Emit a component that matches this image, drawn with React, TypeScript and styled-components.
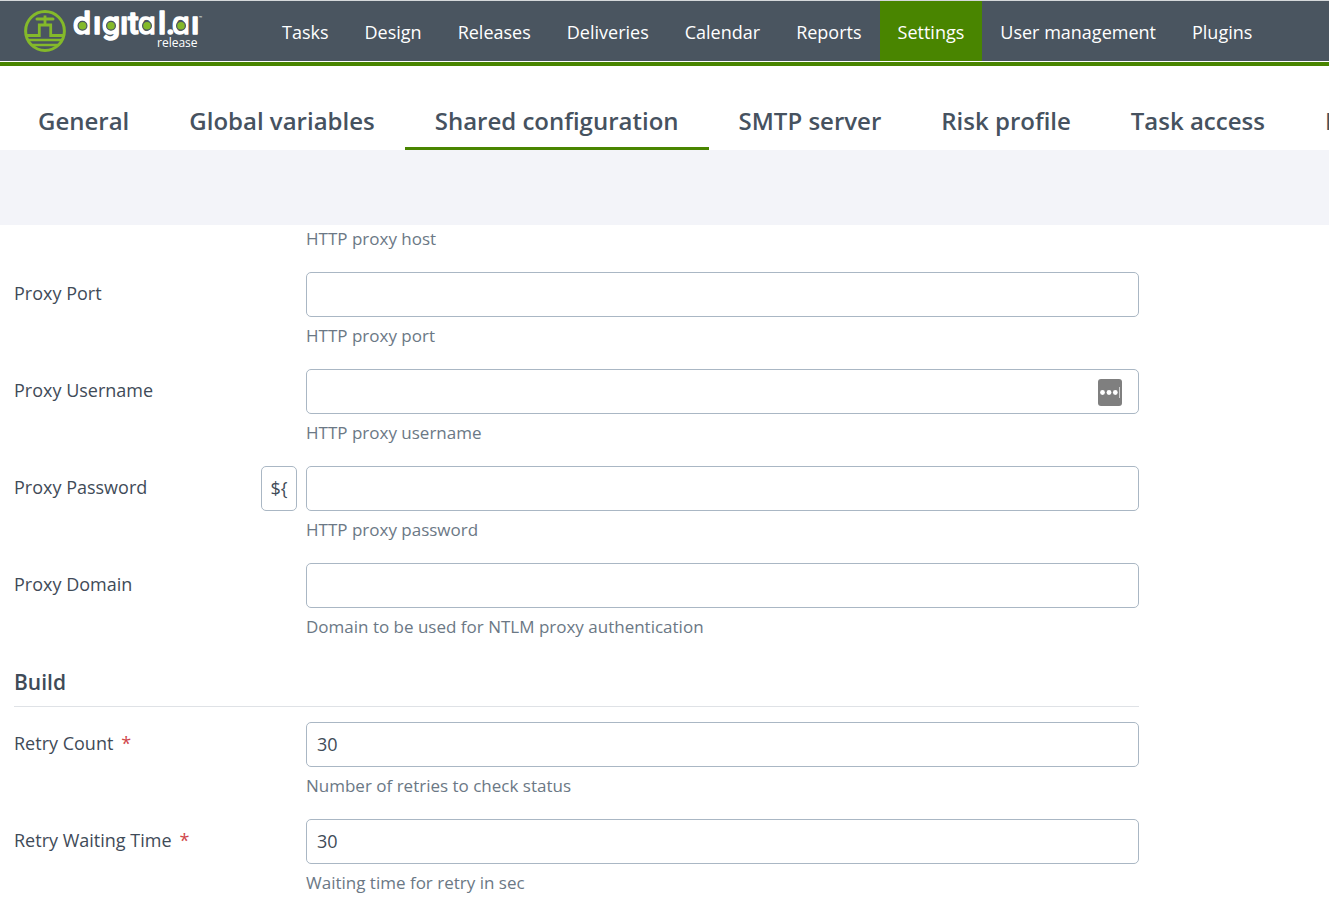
import React from "react";
import styled, { createGlobalStyle } from "styled-components";

const GlobalStyle = createGlobalStyle`
  *, *::before, *::after { box-sizing: border-box; }
  body {
    margin: 0;
    background: #fff;
    color: #3f4b58;
    font-family: "Open Sans", sans-serif;
    font-size: 18px;
    overflow-x: hidden;
  }
`;

const Header = styled.header`
  display: flex;
  align-items: stretch;
  height: 62px;
  background: #4a5560;
  border-top: 1px solid #d5d8da;
  border-bottom: 1px solid #fff;
`;

const HeaderRule = styled.div`
  height: 4px;
  background: #498500;
`;

const LogoLink = styled.a`
  display: block;
  flex: none;
  width: 264px;
  padding-left: 20px;
  height: 60px;
`;

const MainNav = styled.nav`
  display: flex;
`;

const NavLink = styled.a<{ $active?: boolean }>`
  display: flex;
  align-items: center;
  padding: 2px 18px 0;
  color: #fff;
  font-weight: 400;
  line-height: 24px;
  white-space: nowrap;
  text-decoration: none;
  background: ${(p) => (p.$active ? "#498500" : "transparent")};
`;

const TabBar = styled.nav`
  display: flex;
  height: 84px;
  padding: 28px 8px 0;
  overflow: hidden;
`;

const Tab = styled.a<{ $active?: boolean }>`
  display: flex;
  flex: none;
  align-items: center;
  padding: 0 30px;
  border-bottom: 3px solid ${(p) => (p.$active ? "#498500" : "transparent")};
  color: #46525f;
  font-size: 24px;
  font-weight: 600;
  line-height: 32px;
  text-decoration: none;
  white-space: nowrap;
`;

const ActionBar = styled.div`
  height: 75px;
  background: #f3f4f9;
`;

const Form = styled.form`
  padding: 4px 190px 0 14px;
`;

const Row = styled.div`
  display: grid;
  grid-template-columns: 238px 36px minmax(0, 1fr);
  column-gap: 9px;
  margin-bottom: 23px;
`;

const Label = styled.label`
  grid-column: 1;
  line-height: 43px;
`;

const Required = styled.span`
  margin-left: 8px;
  color: #d0464b;
`;

const VariableButton = styled.button`
  grid-column: 2;
  height: 45px;
  padding: 0 0 2px;
  border: 1px solid #aab7c4;
  border-radius: 5px;
  background: #fff;
  color: #3f4b58;
  font: inherit;
`;

const Control = styled.div`
  grid-column: 3;
  position: relative;
`;

const TextInput = styled.input`
  display: block;
  width: 100%;
  height: 45px;
  padding: 0 10px 2px;
  border: 1px solid #aab7c4;
  border-radius: 5px;
  background: #fff;
  color: #3f4b58;
  font: inherit;
  outline: none;
`;

const FillBadge = styled.svg`
  position: absolute;
  top: 10px;
  right: 17px;
`;

const Help = styled.div`
  grid-column: 3;
  margin-top: 9px;
  color: #6b7885;
  font-size: 17px;
  line-height: 20px;
`;

const FirstHelp = styled(Help)`
  margin-top: 0;
`;

const SectionTitle = styled.h2`
  margin: 0 0 15px;
  padding-bottom: 2px;
  border-bottom: 1px solid #dfe2e6;
  font-size: 21px;
  font-weight: 600;
  line-height: 44px;
`;

function Logo() {
  return (
    <svg width="186" height="60" viewBox="20 1 186 60" role="img" aria-label="digital.ai release">
      <g fill="none" stroke="#84b92a" strokeWidth="3">
        <circle cx="45" cy="31" r="19.4" />
        <path d="M27 35.500H39.300V25H50.700V35.500H63M45 15.500V25" strokeWidth="2.800" />
        <path d="M37 19H53" strokeLinecap="round" />
        <path d="M28 40H62M32 45H58" strokeWidth="2.400" />
      </g>
      <g fill="#fff" stroke="#fff" strokeWidth="1.400" strokeLinejoin="round">
        <text
          x="73 93 102 120 128 138 158 166 172 191"
          y="34"
          fontFamily="Roboto, sans-serif"
          fontSize="32"
          fontWeight="500"
        >
          dıgıtɑl.ɑı
        </text>
      </g>
      <g fill="#84b92a" stroke="#4a5560" strokeWidth="1.200">
        <circle cx="82.500" cy="25.800" r="4.400" />
        <circle cx="111" cy="25.800" r="4.400" />
        <circle cx="147" cy="25.800" r="4.400" />
        <circle cx="181" cy="25.800" r="4.400" />
      </g>
      <g fill="#fff">
        <text x="157" y="47" fontFamily="Open Sans, sans-serif" fontSize="12">
          release
        </text>
        <text x="199" y="19" fontFamily="Open Sans, sans-serif" fontSize="4">
          ™
        </text>
      </g>
    </svg>
  );
}

function AutofillIcon() {
  return (
    <FillBadge width="24" height="27" viewBox="0 0 24 27" aria-hidden="true">
      <rect width="24" height="27" rx="3" fill="#7f7f7f" />
      <g fill="#fff">
        <circle cx="4.500" cy="13.500" r="2.400" />
        <circle cx="11" cy="13.500" r="2.400" />
        <circle cx="17.300" cy="13.500" r="2.400" />
        <rect x="21" y="8" width="1" height="11" fill="#d0d0d0" />
      </g>
    </FillBadge>
  );
}

type FieldProps = {
  id: string;
  label: string;
  help: string;
  value?: string;
  required?: boolean;
  variable?: boolean;
  autofill?: boolean;
  type?: string;
};

function Field({ id, label, help, value = "", required, variable, autofill, type = "text" }: FieldProps) {
  return (
    <Row>
      <Label htmlFor={id}>
        {label}
        {required && <Required>*</Required>}
      </Label>
      {variable && <VariableButton type="button">{"${"}</VariableButton>}
      <Control>
        <TextInput id={id} type={type} defaultValue={value} required={required} aria-describedby={id + "-help"} />
        {autofill && <AutofillIcon />}
      </Control>
      <Help id={id + "-help"}>{help}</Help>
    </Row>
  );
}

const navItems = [
  "Tasks",
  "Design",
  "Releases",
  "Deliveries",
  "Calendar",
  "Reports",
  "Settings",
  "User management",
  "Plugins",
];

const tabs = [
  "General",
  "Global variables",
  "Shared configuration",
  "SMTP server",
  "Risk profile",
  "Task access",
  "Features",
];

export default function App() {
  return (
    <>
      <GlobalStyle />
      <Header>
        <LogoLink href="#home">
          <Logo />
        </LogoLink>
        <MainNav>
          {navItems.map((item) => (
            <NavLink key={item} href="#nav" $active={item === "Settings"}>
              {item}
            </NavLink>
          ))}
        </MainNav>
      </Header>
      <HeaderRule />
      <TabBar>
        {tabs.map((tab) => (
          <Tab key={tab} href="#tab" $active={tab === "Shared configuration"}>
            {tab}
          </Tab>
        ))}
      </TabBar>
      <ActionBar />
      <Form>
        <Row>
          <FirstHelp>HTTP proxy host</FirstHelp>
        </Row>
        <Field id="port" label="Proxy Port" help="HTTP proxy port" />
        <Field id="username" label="Proxy Username" help="HTTP proxy username" autofill />
        <Field id="password" label="Proxy Password" help="HTTP proxy password" type="password" variable />
        <Field id="domain" label="Proxy Domain" help="Domain to be used for NTLM proxy authentication" />
        <SectionTitle>Build</SectionTitle>
        <Field id="retries" label="Retry Count" help="Number of retries to check status" value="30" required />
        <Field id="wait" label="Retry Waiting Time" help="Waiting time for retry in sec" value="30" required />
      </Form>
    </>
  );
}
